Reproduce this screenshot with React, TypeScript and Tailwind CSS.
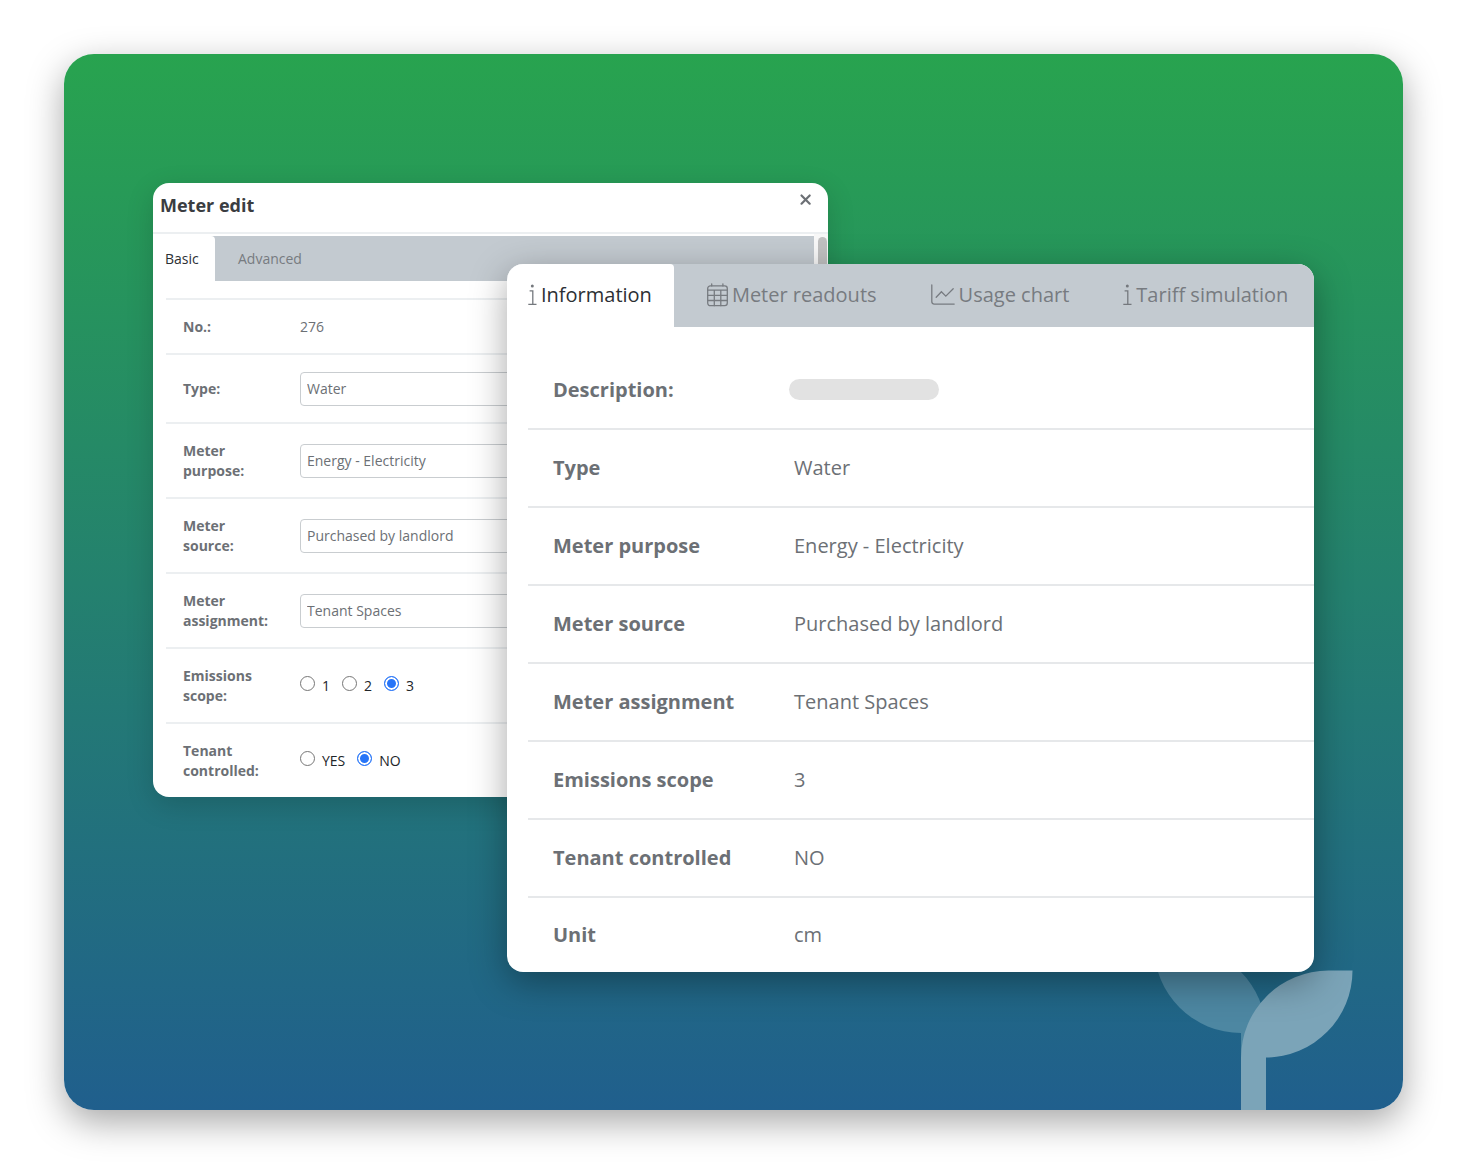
import React, { useState } from 'react';

type TabId = 'information' | 'readouts' | 'usage' | 'tariff';

const InfoIcon = () => (
  <svg width="9" height="22" viewBox="0 0 9 22" fill="none" stroke="currentColor" strokeWidth="1.3" className="shrink-0 text-[#74787d]" aria-hidden="true">
    <circle cx="4.3" cy="2" r="1.5" fill="currentColor" stroke="none" />
    <path d="M1.6 6.8h3.2v13.4M.3 20.3h8.2" />
  </svg>
);

const CalendarIcon = () => (
  <svg width="21" height="24" viewBox="0 0 21 24" fill="none" stroke="currentColor" strokeWidth="1.3" strokeLinecap="round" className="shrink-0" aria-hidden="true">
    <rect x=".7" y="2.9" width="19.6" height="19.8" rx="2.6" />
    <path d="M.7 7.2h19.6M.7 12.3h19.6M.7 17.5h19.6M7.3 7.2v15.5M13.8 7.2v15.5M4.7 .8v2.1M15.9 .8v2.1" />
  </svg>
);

const ChartIcon = () => (
  <svg width="24" height="22" viewBox="0 0 24 22" fill="none" stroke="currentColor" strokeWidth="1.3" strokeLinecap="round" className="shrink-0" aria-hidden="true">
    <path d="M.8 1v16.6c0 1.6.9 2.5 2.5 2.5h19.9" />
    <path d="M5.2 13.2l5.2-5.5 4.4 4.4 7.4-7.3" />
  </svg>
);

const Sapling = () => (
  <svg width="199" height="164" viewBox="0 0 199 164" className="absolute right-[50px] bottom-0" aria-hidden="true">
    <path d="M0 0h25a87 87 0 0 1 87 87v25H87V87A87 87 0 0 1 0 0z" fill="#4d87a2" />
    <path d="M87 164v-52a87.500 87.500 0 0 1 87.500-87.500h24a87 87 0 0 1-86.500 87V164z" fill="#7ba4b8" />
  </svg>
);

const tabs: { id: TabId; label: string; icon: React.ReactNode }[] = [
  { id: 'information', label: 'Information', icon: <InfoIcon /> },
  { id: 'readouts', label: 'Meter readouts', icon: <CalendarIcon /> },
  { id: 'usage', label: 'Usage chart', icon: <ChartIcon /> },
  { id: 'tariff', label: 'Tariff simulation', icon: <InfoIcon /> },
];

const details = [
  { label: 'Description:', value: '' },
  { label: 'Type', value: 'Water' },
  { label: 'Meter purpose', value: 'Energy - Electricity' },
  { label: 'Meter source', value: 'Purchased by landlord' },
  { label: 'Meter assignment', value: 'Tenant Spaces' },
  { label: 'Emissions scope', value: '3' },
  { label: 'Tenant controlled', value: 'NO' },
  { label: 'Unit', value: 'cm' },
];

const selects = [
  { id: 'meter-type', label: 'Type:', value: 'Water' },
  { id: 'meter-purpose', label: 'Meter purpose:', value: 'Energy - Electricity' },
  { id: 'meter-source', label: 'Meter source:', value: 'Purchased by landlord' },
  { id: 'meter-assignment', label: 'Meter assignment:', value: 'Tenant Spaces' },
];

const radios = [
  { name: 'scope', label: 'Emissions scope:', options: ['1', '2', '3'], value: '3' },
  { name: 'tenant', label: 'Tenant controlled:', options: ['YES', 'NO'], value: 'NO' },
];

const rowClass = 'grid grid-cols-[117px_1fr] items-center border-t-2 border-[#eceff1] pl-[17px]';
const labelClass = 'w-[90px] text-sm leading-5 font-bold text-[#6c7075]';

const MeterEdit: React.FC = () => (
  <section className="relative col-start-1 col-end-3 row-start-1 flex flex-col self-start overflow-hidden rounded-2xl bg-white shadow-[0_8px_28px_rgba(0,0,0,0.16)]">
    <header className="flex h-[51px] items-start justify-between border-b-2 border-[#eceff1] pt-2 pr-4 pl-[7px]">
      <h2 className="text-lg leading-7 font-bold text-[#3a3d41]">Meter edit</h2>
      <button type="button" aria-label="Close" className="flex h-4 items-center text-[#6c7075]">
        <svg width="13" height="13" viewBox="0 0 13 13" fill="none" stroke="currentColor" strokeWidth="2.200" strokeLinecap="round" aria-hidden="true">
          <path d="M2.500 2.500l8.200 8.200M10.700 2.500l-8.200 8.200" />
        </svg>
      </button>
    </header>

    <div className="flex">
      <div className="min-w-0 flex-1 pt-0.5">
        <nav className="flex h-[45px] bg-[#c3cad0]">
          <button type="button" className="w-[62px] rounded-tr-sm bg-white pl-3 text-left text-sm text-[#2c3034]">Basic</button>
          <button type="button" className="px-[23px] text-sm text-[#777b80]">Advanced</button>
        </nav>
        <form className="mt-[17px] ml-[13px]">
          <div className={`${rowClass} h-[55px]`}>
            <span className={labelClass}>No.:</span>
            <span className="text-sm text-[#6c7075]">276</span>
          </div>
          {selects.map((s, i) => (
            <div key={s.id} className={`${rowClass} ${i === 0 ? 'h-[69px]' : 'h-[75px]'}`}>
              <label htmlFor={s.id} className={labelClass}>{s.label}</label>
              <select id={s.id} className="h-[34px] appearance-none rounded border border-[#c9cdd0] bg-white px-1.5 text-sm text-[#6c7075]">
                <option>{s.value}</option>
              </select>
            </div>
          ))}
          {radios.map(r => (
            <fieldset key={r.name} className={`${rowClass} h-[75px]`}>
              <span className={labelClass}>{r.label}</span>
              <div className="flex gap-3">
                {r.options.map(o => (
                  <label key={o} className="flex items-start gap-[7px] text-sm leading-5 text-[#212529]">
                    <input
                      type="radio"
                      name={r.name}
                      defaultChecked={o === r.value}
                      className="size-[15px] appearance-none rounded-full border border-[#767676] bg-white checked:border-[#2775f8] checked:bg-[#2775f8] checked:shadow-[inset_0_0_0_2px_white]"
                    />
                    {o}
                  </label>
                ))}
              </div>
            </fieldset>
          ))}
        </form>
      </div>
      <div className="w-3.5 bg-[#f8f8f8] pt-[3px] pr-px pl-1">
        <div className="h-40 rounded-full bg-[#c1c1c1]" />
      </div>
    </div>
  </section>
);

const MeterDetails: React.FC = () => {
  const [active, setActive] = useState<TabId>('information');

  return (
    <section className="relative col-start-2 col-end-4 row-start-1 mt-[81px] self-start overflow-hidden rounded-2xl bg-white shadow-[0_10px_36px_rgba(0,0,0,0.35)]">
      <nav className="flex h-[63px] bg-[#c3cad0]">
        {tabs.map(tab => (
          <button
            key={tab.id}
            type="button"
            onClick={() => setActive(tab.id)}
            className={
              tab.id === active
                ? 'flex items-center gap-1 rounded-tr bg-white pr-[22px] pb-0.5 pl-[21px] text-xl whitespace-nowrap text-[#2c3034]'
                : 'flex items-center gap-1 pr-[21px] pb-0.5 pl-[33px] text-xl whitespace-nowrap text-[#777b80]'
            }
          >
            {tab.icon}
            {tab.label}
          </button>
        ))}
      </nav>
      <div className="pt-6 pl-[21px]">
        <table className="w-full border-collapse text-xl text-[#6c7075]">
          <tbody>
            {details.map(d => (
              <tr key={d.label} className="h-[78px] border-b-2 border-[#e6e8ea] last:h-[75px] last:border-b-0">
                <th scope="row" className="w-[261px] pl-[25px] text-left font-bold">{d.label}</th>
                <td>
                  {d.value ? <span className="pl-[5px]">{d.value}</span> : <div className="h-[21px] w-[150px] rounded-full bg-[#e2e2e2]" />}
                </td>
              </tr>
            ))}
          </tbody>
        </table>
      </div>
    </section>
  );
};

const App: React.FC = () => {
  return (
    <div className="min-h-screen bg-white pt-[54px] pr-[67px] pb-[57px] pl-16 font-['Open_Sans',sans-serif]">
      <main className="relative grid grid-cols-[354fr_321fr_486fr] overflow-clip rounded-[30px] bg-linear-to-b/srgb from-[#28a34f] to-[#205f8d] px-[89px] pt-[129px] pb-[138px] shadow-[0_12px_36px_rgba(0,0,0,0.35)]">
        <Sapling />
        <MeterEdit />
        <MeterDetails />
      </main>
    </div>
  );
};

export default App;
